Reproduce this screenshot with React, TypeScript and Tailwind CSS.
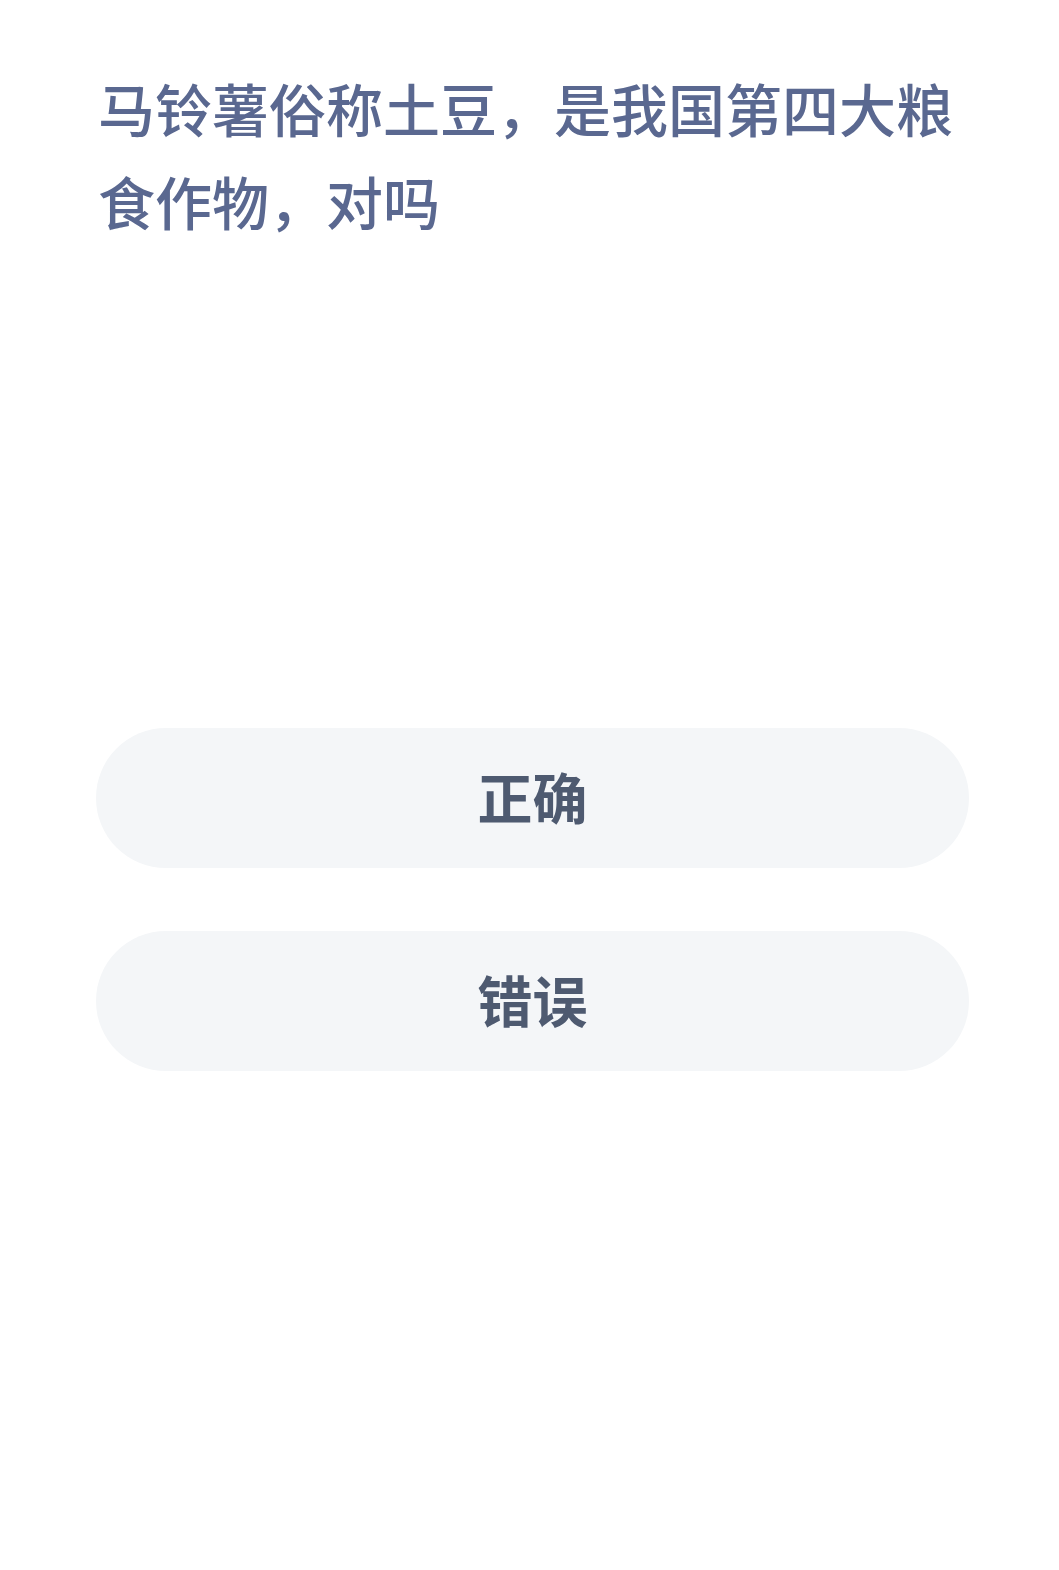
export default function App() {
  const options = ['正确', '错误'];

  return (
    <div
      className="min-h-[1570px] w-full bg-white"
      style={{ fontFamily: '"Noto Sans CJK SC", "Noto Sans", sans-serif' }}
    >
      {/* Question */}
      <div className="pl-[98px] pr-[92px] pt-[61px]">
        <h1 className="text-[57px] leading-[93px] font-medium text-[#5a6890]">
          马铃薯俗称土豆，是我国第四大粮食作物，对吗
        </h1>
      </div>

      {/* Answers */}
      <div className="mt-[481px] flex flex-col gap-[63px] pl-[96px] pr-[90px]">
        {options.map((opt) => (
          <button
            key={opt}
            className="h-[140px] w-full rounded-full bg-[#f4f6f8] pb-[6px] text-[55px] font-bold text-[#4e5a70] flex items-center justify-center"
          >
            {opt}
          </button>
        ))}
      </div>
    </div>
  );
}
